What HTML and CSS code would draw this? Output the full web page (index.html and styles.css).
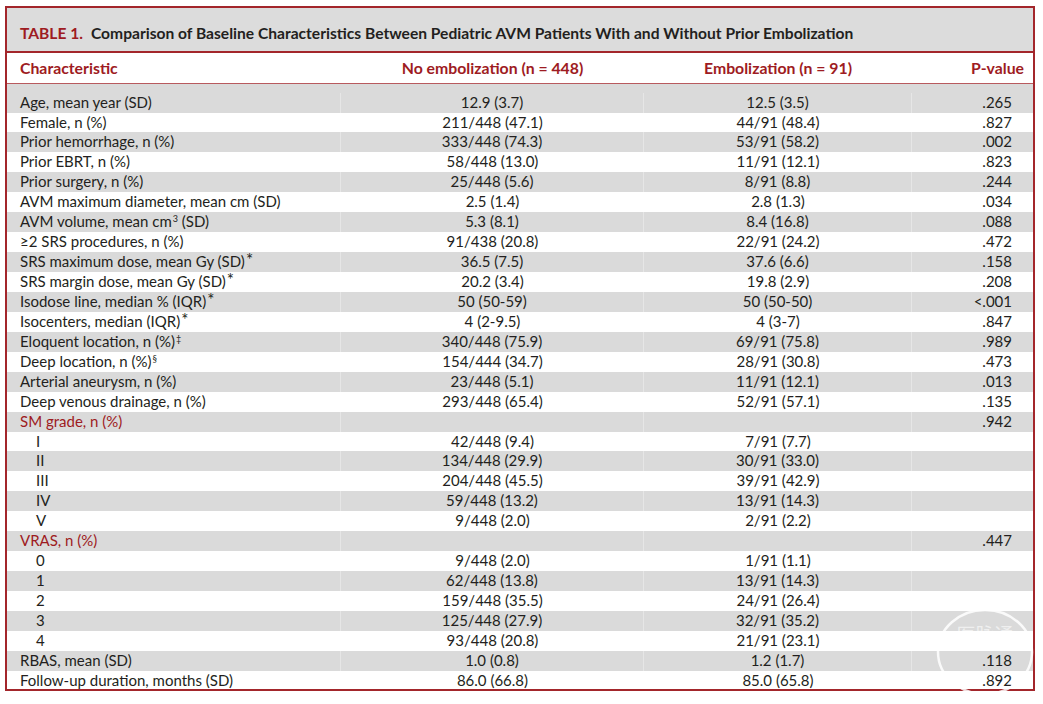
FILE: index.html
```html
<!DOCTYPE html>
<html>
<head>
<meta charset="utf-8">
<link rel="stylesheet" href="styles.css">
</head>
<body>
<div class="table">
  <div class="title"><span class="tnum">TABLE 1.</span>Comparison of Baseline Characteristics Between Pediatric AVM Patients With and Without Prior Embolization</div>
  <div class="row head">
    <div class="c c1">Characteristic</div>
    <div class="c c2">No embolization (n = 448)</div>
    <div class="c c3">Embolization (n = 91)</div>
    <div class="c c4">P-value</div>
  </div>
  <div class="body">
    <div class="row shade first"><div class="c c1">Age, mean year (SD)</div><div class="c c2">12.9 (3.7)</div><div class="c c3">12.5 (3.5)</div><div class="c c4">.265</div></div>
    <div class="row"><div class="c c1">Female, n (%)</div><div class="c c2">211/448 (47.1)</div><div class="c c3">44/91 (48.4)</div><div class="c c4">.827</div></div>
    <div class="row shade"><div class="c c1">Prior hemorrhage, n (%)</div><div class="c c2">333/448 (74.3)</div><div class="c c3">53/91 (58.2)</div><div class="c c4">.002</div></div>
    <div class="row"><div class="c c1">Prior EBRT, n (%)</div><div class="c c2">58/448 (13.0)</div><div class="c c3">11/91 (12.1)</div><div class="c c4">.823</div></div>
    <div class="row shade"><div class="c c1">Prior surgery, n (%)</div><div class="c c2">25/448 (5.6)</div><div class="c c3">8/91 (8.8)</div><div class="c c4">.244</div></div>
    <div class="row"><div class="c c1">AVM maximum diameter, mean cm (SD)</div><div class="c c2">2.5 (1.4)</div><div class="c c3">2.8 (1.3)</div><div class="c c4">.034</div></div>
    <div class="row shade"><div class="c c1">AVM volume, mean cm<sup>3</sup> (SD)</div><div class="c c2">5.3 (8.1)</div><div class="c c3">8.4 (16.8)</div><div class="c c4">.088</div></div>
    <div class="row"><div class="c c1">≥2 SRS procedures, n (%)</div><div class="c c2">91/438 (20.8)</div><div class="c c3">22/91 (24.2)</div><div class="c c4">.472</div></div>
    <div class="row shade"><div class="c c1">SRS maximum dose, mean Gy (SD)<span class="ast">*</span></div><div class="c c2">36.5 (7.5)</div><div class="c c3">37.6 (6.6)</div><div class="c c4">.158</div></div>
    <div class="row"><div class="c c1">SRS margin dose, mean Gy (SD)<span class="ast">*</span></div><div class="c c2">20.2 (3.4)</div><div class="c c3">19.8 (2.9)</div><div class="c c4">.208</div></div>
    <div class="row shade"><div class="c c1">Isodose line, median % (IQR)<span class="ast">*</span></div><div class="c c2">50 (50-59)</div><div class="c c3">50 (50-50)</div><div class="c c4">&lt;.001</div></div>
    <div class="row"><div class="c c1">Isocenters, median (IQR)<span class="ast">*</span></div><div class="c c2">4 (2-9.5)</div><div class="c c3">4 (3-7)</div><div class="c c4">.847</div></div>
    <div class="row shade"><div class="c c1">Eloquent location, n (%)<sup>‡</sup></div><div class="c c2">340/448 (75.9)</div><div class="c c3">69/91 (75.8)</div><div class="c c4">.989</div></div>
    <div class="row"><div class="c c1">Deep location, n (%)<sup>§</sup></div><div class="c c2">154/444 (34.7)</div><div class="c c3">28/91 (30.8)</div><div class="c c4">.473</div></div>
    <div class="row shade"><div class="c c1">Arterial aneurysm, n (%)</div><div class="c c2">23/448 (5.1)</div><div class="c c3">11/91 (12.1)</div><div class="c c4">.013</div></div>
    <div class="row"><div class="c c1">Deep venous drainage, n (%)</div><div class="c c2">293/448 (65.4)</div><div class="c c3">52/91 (57.1)</div><div class="c c4">.135</div></div>
    <div class="row shade"><div class="c c1 cat">SM grade, n (%)</div><div class="c c2"></div><div class="c c3"></div><div class="c c4">.942</div></div>
    <div class="row"><div class="c c1 sub">I</div><div class="c c2">42/448 (9.4)</div><div class="c c3">7/91 (7.7)</div><div class="c c4"></div></div>
    <div class="row shade"><div class="c c1 sub">II</div><div class="c c2">134/448 (29.9)</div><div class="c c3">30/91 (33.0)</div><div class="c c4"></div></div>
    <div class="row"><div class="c c1 sub">III</div><div class="c c2">204/448 (45.5)</div><div class="c c3">39/91 (42.9)</div><div class="c c4"></div></div>
    <div class="row shade"><div class="c c1 sub">IV</div><div class="c c2">59/448 (13.2)</div><div class="c c3">13/91 (14.3)</div><div class="c c4"></div></div>
    <div class="row"><div class="c c1 sub">V</div><div class="c c2">9/448 (2.0)</div><div class="c c3">2/91 (2.2)</div><div class="c c4"></div></div>
    <div class="row shade"><div class="c c1 cat">VRAS, n (%)</div><div class="c c2"></div><div class="c c3"></div><div class="c c4">.447</div></div>
    <div class="row"><div class="c c1 sub">0</div><div class="c c2">9/448 (2.0)</div><div class="c c3">1/91 (1.1)</div><div class="c c4"></div></div>
    <div class="row shade"><div class="c c1 sub">1</div><div class="c c2">62/448 (13.8)</div><div class="c c3">13/91 (14.3)</div><div class="c c4"></div></div>
    <div class="row"><div class="c c1 sub">2</div><div class="c c2">159/448 (35.5)</div><div class="c c3">24/91 (26.4)</div><div class="c c4"></div></div>
    <div class="row shade"><div class="c c1 sub">3</div><div class="c c2">125/448 (27.9)</div><div class="c c3">32/91 (35.2)</div><div class="c c4"></div></div>
    <div class="row"><div class="c c1 sub">4</div><div class="c c2">93/448 (20.8)</div><div class="c c3">21/91 (23.1)</div><div class="c c4"></div></div>
    <div class="row shade"><div class="c c1">RBAS, mean (SD)</div><div class="c c2">1.0 (0.8)</div><div class="c c3">1.2 (1.7)</div><div class="c c4">.118</div></div>
    <div class="row last"><div class="c c1">Follow-up duration, months (SD)</div><div class="c c2">86.0 (66.8)</div><div class="c c3">85.0 (65.8)</div><div class="c c4">.892</div></div>
  </div>
  <svg class="watermark" width="100" height="92" viewBox="0 0 100 92">
    <ellipse cx="50" cy="46" rx="47" ry="42" fill="none" stroke="#ffffff" stroke-opacity="0.85" stroke-width="2.5"/>
    <text x="50" y="36" text-anchor="middle" font-size="19" fill="#ffffff" fill-opacity="0.6" font-family="Noto Sans CJK SC, sans-serif">医脉通</text>
  </svg>
</div>
</body>
</html>
```
FILE: styles.css
```css
html, body {
  margin: 0;
  padding: 0;
  background: #ffffff;
}

body {
  padding: 6px 0 0 5px;
  font-family: Lato, "Open Sans", "Liberation Sans", sans-serif;
  font-size: 15px;
  color: #231f20;
}

.table {
  position: relative;
  width: 1026px;
  border: 2px solid #a3262b;
  background: #ffffff;
}

.title {
  height: 43px;
  line-height: 50px;
  padding-left: 13px;
  background: #dcdcdc;
  border-bottom: 2px solid #a3262b;
  font-weight: 700;
  font-size: 15.6px;
  color: #231f20;
  white-space: nowrap;
}

.tnum {
  color: #9e1b22;
  margin-right: 8px;
}

.row {
  display: grid;
  grid-template-columns: 334px 303px 268px 1fr;
  height: 19.95px;
  line-height: 19.95px;
}

.row.head {
  height: 30px;
  line-height: 30px;
  border-bottom: 1px solid #b85a5e;
  font-weight: 700;
  font-size: 15.8px;
  color: #9e1b22;
}

.row.first {
  height: 28.5px;
  padding-top: 8.5px;
  box-sizing: border-box;
  line-height: 19px;
}

.row.last {
  height: 18px;
  line-height: 18px;
}

.shade {
  background: #dadada;
}

.c {
  white-space: nowrap;
}

.shade .c1, .shade .c2, .shade .c3 {
  border-right: 1px solid #e6e6e6;
}

.c1 {
  padding-left: 13px;
}

.c2, .c3 {
  text-align: center;
}

.c4 {
  text-align: right;
  padding-right: 21px;
}

.head .c4 {
  padding-right: 9px;
}

.cat {
  color: #9e1b22;
}

.sub {
  padding-left: 29px;
}

sup {
  font-size: 9px;
  line-height: 0;
  vertical-align: 5px;
  margin-left: 1px;
}

.ast {
  font-size: 17px;
  line-height: 0;
  position: relative;
  top: -1px;
  margin-left: 1px;
}

.watermark {
  position: absolute;
  left: 928px;
  top: 598px;
  pointer-events: none;
}
```
